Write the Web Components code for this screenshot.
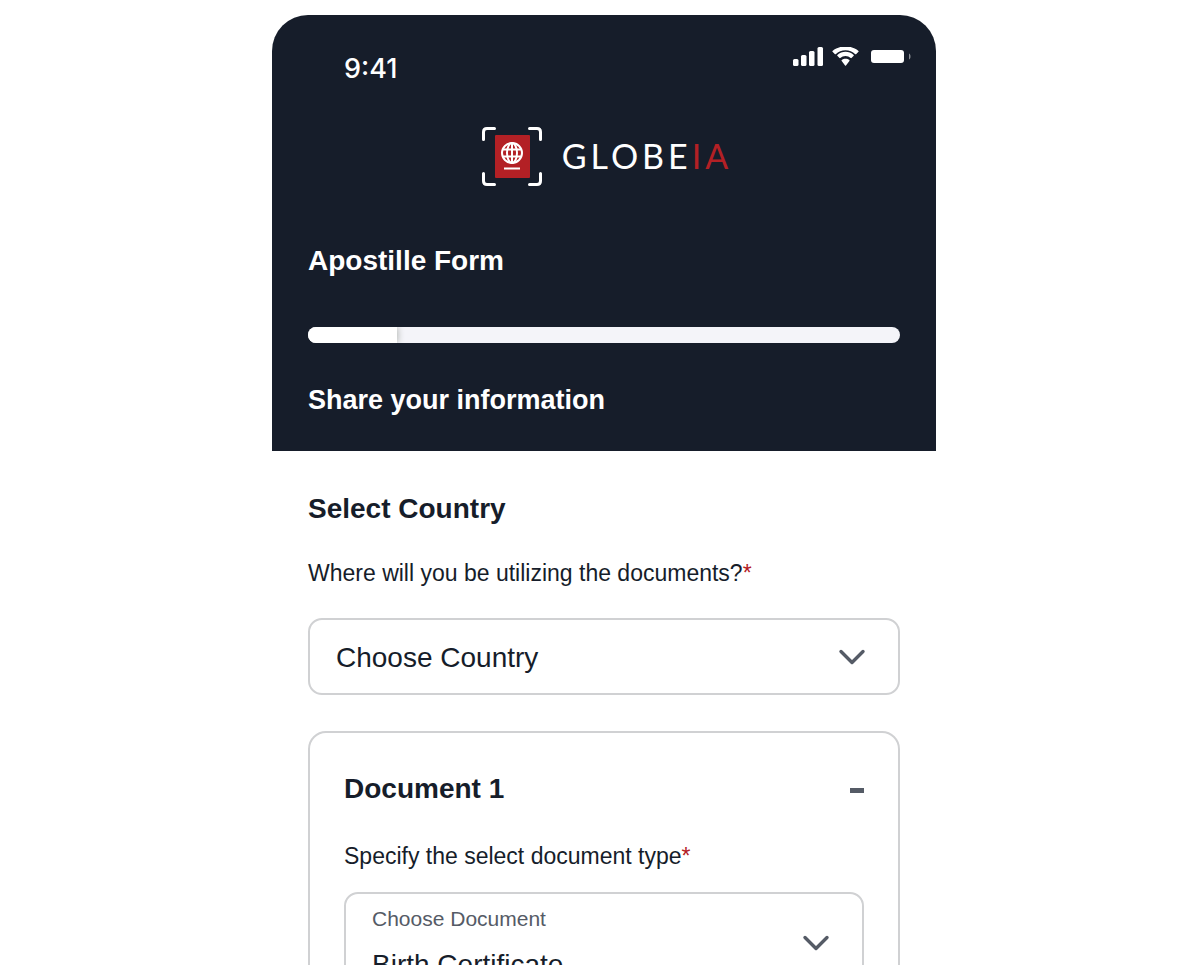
<!DOCTYPE html>
<html lang="en">
<head>
<meta charset="utf-8">
<meta name="viewport" content="width=device-width, initial-scale=1">
<title>Globeia – Apostille Form</title>
<style>
  :root {
    --navy: #161d2a;
    --red: #b32025;
    --line: #d0d1d3;
    --muted: #555b66;
    --gutter: 36px;
  }
  body {
    margin: 0;
    background: #fff;
    color: var(--navy);
    font-family: "Liberation Sans", Arial, sans-serif;
  }
</style>
</head>
<body>
<phone-screen>
  <app-header slot="header" heading="Apostille Form" step="Share your information" value="15">
    <status-bar slot="status" time="9:41"></status-bar>
    <brand-logo slot="logo"></brand-logo>
  </app-header>
  <form-section heading="Select Country">
    <select-field label="Where will you be utilizing the documents?" options="Choose Country"></select-field>
  </form-section>
  <document-card heading="Document 1">
    <select-field compact label="Specify the select document type" hint="Choose Document" options="Birth Certificate"></select-field>
  </document-card>
</phone-screen>

<script>
  const define = (name, render, connected) => customElements.define(name, class extends HTMLElement {
    connectedCallback() {
      if (this.shadowRoot) return;
      this.attachShadow({ mode: "open" }).innerHTML = render(this);
      if (connected) connected(this);
    }
  });

  define("phone-screen", () => `
    <style>
      :host { display: block; box-sizing: border-box; height: 100vh; padding: 15px 0 5px 8px; }
      .screen { max-width: 664px; height: 100%; margin: 0 auto; overflow: hidden; border-radius: 36px 36px 0 0; }
      main { display: flex; flex-direction: column; gap: 36px; padding: 41px var(--gutter) 36px; }
    </style>
    <div class="screen">
      <slot name="header"></slot>
      <main><slot></slot></main>
    </div>`);

  define("app-header", el => `
    <style>
      :host { display: block; padding: 32px 0 35px; background: var(--navy); color: #fff; }
      .logo { display: flex; justify-content: center; margin-top: 36px; }
      .info { padding: 0 var(--gutter); }
      h1 { margin: 58px 0 49px; font-size: 28px; line-height: 34px; }
      h2 { margin: 41px 0 0; font-size: 27px; line-height: 32px; }
      .track { height: 16px; border-radius: 8px; background: #f4f4f9; overflow: hidden; }
      .fill { height: 100%; background: #fff; box-shadow: 1px 0 6px #b4b8b4; }
    </style>
    <slot name="status"></slot>
    <div class="logo"><slot name="logo"></slot></div>
    <div class="info">
      <h1>${el.getAttribute("heading")}</h1>
      <div class="track" role="progressbar" aria-label="Form progress" aria-valuenow="${el.getAttribute("value")}" aria-valuemin="0" aria-valuemax="100">
        <div class="fill" style="width:${el.getAttribute("value")}%"></div>
      </div>
      <h2>${el.getAttribute("step")}</h2>
    </div>`);

  define("status-bar", el => `
    <style>
      :host { display: flex; justify-content: space-between; align-items: flex-start; padding: 0 24px 0 72px; }
      time { font: 500 27px/44px Inter, sans-serif; }
      svg { display: block; }
    </style>
    <time>${el.getAttribute("time")}</time>
    <svg width="120" height="20" viewBox="0 0 120 20" fill="#fff" aria-hidden="true">
      <rect x="1" y="12" width="5.500" height="7" rx="1.5"/>
      <rect x="9" y="8" width="5.500" height="11" rx="1.5"/>
      <rect x="17" y="4" width="5.500" height="15" rx="1.5"/>
      <rect x="25.500" y="0" width="5.500" height="19" rx="1.500"/>
      <path d="M53.500 3.300c3.700 0 7.100 1.400 9.800 3.900.2.200.5.200.7 0l2.500-2.500c.2-.2.200-.6 0-.8C59.200-2.100 47.800-2.100 40.500 3.900c-.2.200-.2.600 0 .8L43 7.200c.2.200.5.200.7 0 2.700-2.500 6.100-3.900 9.800-3.900z"/>
      <path d="M53.500 9c1.900 0 3.800.8 5.200 2 .2.200.6.200.8 0l2.200-2.300c.2-.2.200-.6 0-.8-4.600-4.200-11.700-4.200-16.400 0-.2.200-.2.600 0 .8l2.200 2.300c.2.200.6.200.8 0 1.400-1.200 3.300-2 5.200-2z"/>
      <path d="M57.400 13.900c.2-.2.200-.5 0-.8-2.200-1.900-5.500-1.900-7.700 0-.3.300-.3.600 0 .8l3.400 4.500c.2.300.7.300.9 0z"/>
      <rect x="79" y="3" width="33" height="13" rx="3"/>
      <path d="M117 6.500v6c2-1 2-5 0-6z" opacity=".5"/>
    </svg>`);

  define("brand-logo", () => `
    <style>
      :host { display: flex; align-items: center; gap: 20px; padding-left: 6px; }
      svg { display: block; }
      .name { padding-bottom: 2px; font: 400 34px/40px Lato, sans-serif; letter-spacing: 4px; }
      .accent { color: var(--red); }
    </style>
    <svg width="60" height="59" viewBox="0 0 60 59" fill="none" aria-hidden="true">
      <path d="M1.500 12.500V5Q1.500 1.500 5 1.500H12.500M47.500 1.500H55Q58.500 1.500 58.500 5V12.500M58.500 46.500V54Q58.500 57.500 55 57.500H47.500M12.500 57.500H5Q1.500 57.500 1.500 54V46.500" stroke="#fff" stroke-width="3" stroke-linecap="round"/>
      <rect x="13" y="8" width="35" height="43" rx="1" fill="#b32025"/>
      <g stroke="#fff" stroke-width="2">
        <circle cx="30" cy="26" r="10"/>
        <ellipse cx="30" cy="26" rx="5" ry="10"/>
        <path d="M30 16V36M21 22.500H39M21 29.500H39M22 41.500H38"/>
      </g>
    </svg>
    <span class="name">GLOBE<span class="accent">IA</span></span>`);

  define("form-section", el => `
    <style>
      :host { display: block; }
      h2 { margin: 0 0 33px; font-size: 28px; line-height: 34px; }
    </style>
    <section><h2>${el.getAttribute("heading")}</h2><slot></slot></section>`);

  define("document-card", el => `
    <style>
      :host { display: block; border: 2px solid var(--line); border-radius: 18px; padding: 39px 34px 34px; }
      header { display: flex; justify-content: space-between; align-items: center; margin-bottom: 36px; }
      h2 { margin: 0; font-size: 28px; line-height: 34px; }
      button { display: flex; border: 0; padding: 6px 0 4px 8px; background: none; cursor: pointer; }
      button::before { content: ""; width: 14px; height: 5px; background: var(--muted); }
    </style>
    <section>
      <header><h2>${el.getAttribute("heading")}</h2><button type="button" aria-label="Collapse" aria-expanded="true"></button></header>
      <div class="content"><slot></slot></div>
    </section>`,
    el => {
      const button = el.shadowRoot.querySelector("button");
      const content = el.shadowRoot.querySelector(".content");
      button.onclick = () => {
        content.hidden = !content.hidden;
        button.setAttribute("aria-expanded", String(!content.hidden));
      };
    });

  define("select-field", el => `
    <style>
      :host { display: flex; flex-direction: column; gap: 31px; }
      :host([compact]) { gap: 22px; }
      .label { font-size: 23px; line-height: 28px; }
      .required { color: var(--red); }
      .box { display: grid; grid-template-columns: 1fr; align-items: center; border: 2px solid var(--line); border-radius: 14px; }
      .box > * { grid-area: 1 / 1; }
      select { appearance: none; width: 100%; height: 73px; margin: 0; border: 0; padding: 2px 62px 0 26px; background: none; color: inherit; font: 28px/34px "Liberation Sans", Arial, sans-serif; border-radius: 12px; }
      .hint { align-self: start; padding: 12px 26px 0; color: var(--muted); font-size: 21px; line-height: 26px; }
      :host([compact]) select { height: 98px; padding-top: 44px; }
      svg { display: block; justify-self: end; margin-right: 32px; pointer-events: none; }
    </style>
    <label class="label" for="choice">${el.getAttribute("label")}<span class="required">*</span></label>
    <div class="box">
      ${el.hasAttribute("hint") ? `<span class="hint" id="hint">${el.getAttribute("hint")}</span>` : ""}
      <select id="choice" required ${el.hasAttribute("hint") ? 'aria-describedby="hint"' : ""}>
        ${el.getAttribute("options").split("|").map(o => `<option>${o}</option>`).join("")}
      </select>
      <svg width="28" height="16" viewBox="0 0 28 16" fill="none" stroke="#555b66" stroke-width="3.4" stroke-linecap="round" stroke-linejoin="round" aria-hidden="true"><path d="M3 2.500 14 13.500 25 2.500"/></svg>
    </div>`);
</script>
</body>
</html>
